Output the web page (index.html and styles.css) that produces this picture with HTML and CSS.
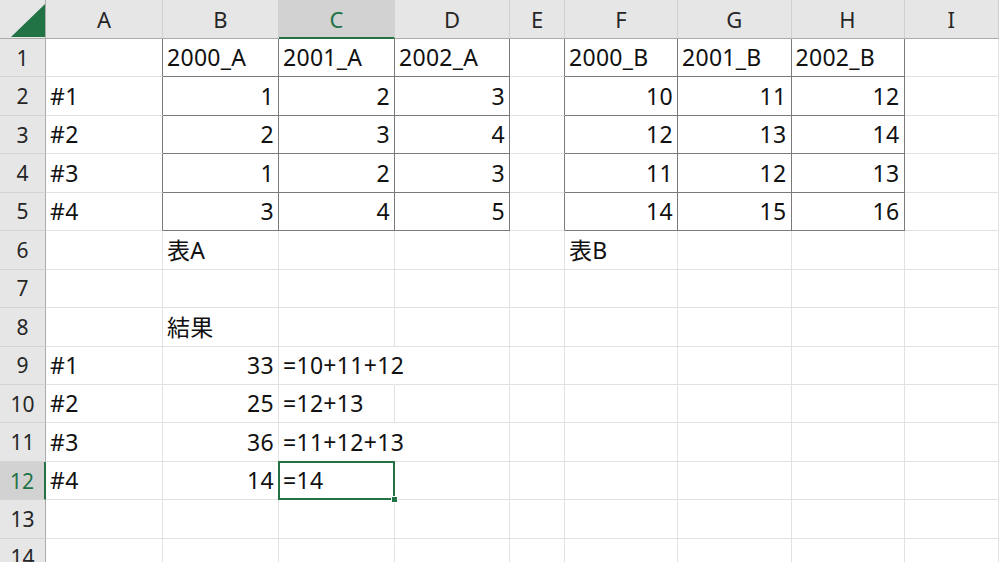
FILE: index.html
```html
<!DOCTYPE html>
<html lang="ja">
<head>
    <meta charset="UTF-8">
    <title>Sheet1</title>
    <link rel="stylesheet" href="styles.css">
</head>
<body>
    <div class="sheet" id="sheet"></div>

    <script>
        const cols = ["A", "B", "C", "D", "E", "F", "G", "H", "I"];

        // 表のデータ (row -> col -> value)
        const data = {
            1: { B: "2000_A", C: "2001_A", D: "2002_A", F: "2000_B", G: "2001_B", H: "2002_B" },
            2: { A: "#1", B: 1, C: 2, D: 3, F: 10, G: 11, H: 12 },
            3: { A: "#2", B: 2, C: 3, D: 4, F: 12, G: 13, H: 14 },
            4: { A: "#3", B: 1, C: 2, D: 3, F: 11, G: 12, H: 13 },
            5: { A: "#4", B: 3, C: 4, D: 5, F: 14, G: 15, H: 16 },
            6: { B: "表A", F: "表B" },
            8: { B: "結果" },
            9: { A: "#1", B: 33, C: "=10+11+12" },
            10: { A: "#2", B: 25, C: "=12+13" },
            11: { A: "#3", B: 36, C: "=11+12+13" },
            12: { A: "#4", B: 14, C: "=14" }
        };

        const sheet = document.getElementById("sheet");

        function cell(cls, text) {
            const div = document.createElement("div");
            div.className = cls;
            if (text !== undefined) div.textContent = text;
            sheet.appendChild(div);
            return div;
        }

        // 左上の三角
        const corner = cell("corner");
        corner.innerHTML = '<svg width="46" height="39" viewBox="0 0 46 39"><polygon points="11,37 45,37 45,4" fill="#217346"/></svg>';

        cols.forEach(c => {
            cell("col-head" + (c === "C" ? " sel" : ""), c);
        });

        for (let r = 1; r <= 14; r++) {
            cell("row-head" + (r === 12 ? " sel" : ""), r);
            cols.forEach(c => {
                const value = data[r] && data[r][c];
                let cls = "cell";
                if (typeof value === "number") cls += " num";
                if (r <= 5 && ["B", "C", "D", "F", "G", "H"].includes(c)) cls += " bd";
                if (r <= 5 && (c === "A" || c === "E")) cls += " bd-right";
                if (c === "C" && typeof value === "string" && value.length > 7) cls += " ov";
                if (r === 12 && c === "C") cls += " active";
                cell(cls, value);
            });
        }
    </script>
</body>
</html>
```

FILE: styles.css
```css
body {
    margin: 0;
    padding: 0;
    height: 100vh;
    overflow: hidden;
    background-color: #ffffff;
    font-family: "Noto Sans", "Noto Sans CJK JP", sans-serif;
}

.sheet {
    display: grid;
    grid-template-columns: 46px 117px 116px 116px 115px 55px 113px 113.5px 113px 1fr;
    grid-template-rows: 39px repeat(14, 38.45px);
    background-color: #ffffff;
}

.corner {
    background-color: #e6e6e6;
    border-right: 1px solid #ababab;
    border-bottom: 1px solid #ababab;
    box-sizing: border-box;
    overflow: hidden;
}

.corner svg {
    display: block;
}

.col-head {
    background-color: #e6e6e6;
    color: #262626;
    font-size: 22px;
    display: flex;
    align-items: center;
    justify-content: center;
    box-sizing: border-box;
    border-right: 1px solid #d0d0d0;
    border-bottom: 1px solid #ababab;
}

.row-head {
    background-color: #e6e6e6;
    color: #262626;
    font-size: 21px;
    display: flex;
    align-items: center;
    justify-content: center;
    box-sizing: border-box;
    border-right: 1px solid #ababab;
    border-bottom: 1px solid #d4d4d4;
}

.col-head.sel {
    background-color: #d2d2d2;
    color: #217346;
    border-bottom: 2px solid #217346;
}

.row-head.sel {
    background-color: #d2d2d2;
    color: #217346;
    border-right: 2px solid #217346;
}

.cell {
    font-size: 23px;
    color: #111;
    display: flex;
    align-items: center;
    padding: 0 4px 1px 4px;
    box-sizing: border-box;
    border-right: 1px solid #e1e1e1;
    border-bottom: 1px solid #e1e1e1;
    white-space: nowrap;
    overflow: visible;
    letter-spacing: 0.3px;
}

.cell.num {
    justify-content: flex-end;
}

/* 表の罫線 */
.cell.bd {
    border-right-color: #7a7a7a;
    border-bottom-color: #7a7a7a;
}

.cell.bd-right {
    border-right-color: #7a7a7a;
}

/* はみ出した文字の下は線を消す */
.cell.ov {
    border-right-color: transparent;
}

.cell.active {
    position: relative;
}

.cell.active::before {
    content: "";
    position: absolute;
    left: -1px;
    top: -1px;
    right: -1px;
    bottom: -1px;
    border: 2px solid #217346;
}

.cell.active::after {
    content: "";
    position: absolute;
    right: -4px;
    bottom: -4px;
    width: 5px;
    height: 5px;
    background-color: #217346;
    border: 1px solid #ffffff;
}
```
